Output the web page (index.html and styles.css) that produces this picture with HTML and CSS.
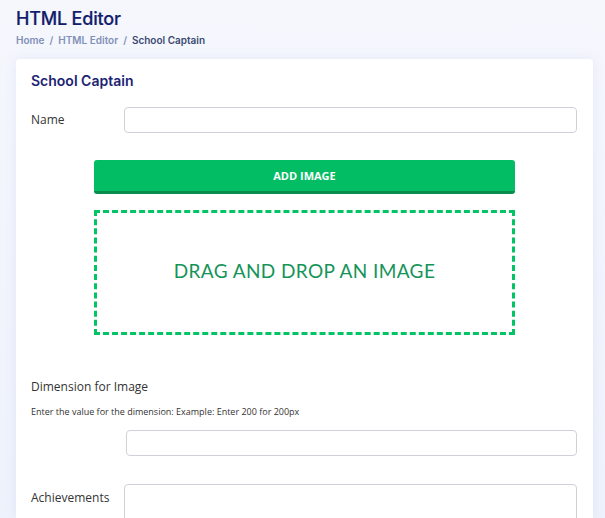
FILE: index.html
```html
<!DOCTYPE html>
<html lang="en">
<head>
<meta charset="utf-8">
<title>HTML Editor</title>
<link rel="stylesheet" href="styles.css">
</head>
<body>
<div class="page">
  <header class="page-head">
    <h1 class="page-title">HTML Editor</h1>
    <nav class="crumbs">
      <a class="crumb">Home</a><span class="sep">/</span><a class="crumb">HTML Editor</a><span class="sep">/</span><span class="crumb current">School Captain</span>
    </nav>
  </header>
  <section class="card">
    <h2 class="card-title">School Captain</h2>
    <div class="row">
      <label class="label">Name</label>
      <input class="input" type="text">
    </div>
    <div class="upload">
      <button class="btn-add">ADD IMAGE</button>
      <div class="dropzone">DRAG AND DROP AN IMAGE</div>
    </div>
    <div class="dim">
      <div class="label">Dimension for Image</div>
      <div class="hint">Enter the value for the dimension: Example: Enter 200 for 200px</div>
      <input class="input dim-input" type="text">
    </div>
    <div class="row row-ach">
      <label class="label">Achievements</label>
      <textarea class="input textarea"></textarea>
    </div>
  </section>
</div>
</body>
</html>
```
FILE: styles.css
```css
* { box-sizing: border-box; }
html, body { margin: 0; padding: 0; }
body {
  background: linear-gradient(180deg, #f5f7fd 0%, #eef2fc 100%);
  font-family: "Open Sans", "Liberation Sans", sans-serif;
  color: #333;
  overflow: hidden;
  height: 518px;
}
.page { padding: 7px 12px 0 16px; height: 518px; overflow: hidden; }
.page-title {
  margin: 0;
  font-family: Inter, "Noto Sans", sans-serif;
  font-weight: 500;
  font-size: 18px;
  line-height: 24px;
  color: #131d6b;
  letter-spacing: -0.2px;
  -webkit-text-stroke: 0.2px #131d6b;
}
.crumbs {
  margin-top: 2px;
  font-family: Inter, "Noto Sans", sans-serif;
  font-size: 10px;
  font-weight: 600;
  line-height: 14px;
  color: #8190b8;
}
.sep { margin: 0 5px; }
.crumb.current { color: #3c4a72; }
.card {
  margin-top: 12px;
  background: #fff;
  border-radius: 4px 4px 0 0;
  box-shadow: 0 0 12px rgba(120, 140, 200, 0.12);
  padding: 13px 16px 0 15px;
  width: 577px;
  height: 459px;
  overflow: hidden;
}
.card-title {
  margin: 0;
  font-family: Inter, "Noto Sans", sans-serif;
  font-weight: 600;
  font-size: 14px;
  line-height: 18px;
  color: #1b2472;
}
.row {
  display: flex;
  align-items: center;
  margin-top: 17px;
}
.label {
  font-size: 12px;
  line-height: 16px;
  color: #333;
  width: 93px;
  flex: none;
}
.input {
  display: block;
  height: 26px;
  flex: 1;
  border: 1px solid #cfd2d8;
  border-radius: 4px;
  background: #fff;
  margin: 0;
}
.upload {
  margin: 27px 62px 0 63px;
}
.btn-add {
  display: block;
  width: 100%;
  height: 34px;
  border: none;
  border-bottom: 3px solid #088e4c;
  border-radius: 3px;
  background: #02bd63;
  color: #fff;
  font-family: "Open Sans", sans-serif;
  font-weight: 700;
  font-size: 11px;
  padding: 0;
}
.dropzone {
  margin-top: 16px;
  height: 125px;
  border: 3px dashed #02c464;
  display: flex;
  align-items: center;
  justify-content: center;
  padding-bottom: 4px;
  font-family: Lato, "Noto Sans", sans-serif;
  font-weight: 400;
  font-size: 19px;
  color: #15945a;
  letter-spacing: 0.4px;
}
.dim { margin-top: 44px; }
.dim .label { width: auto; }
.hint {
  margin-top: 11px;
  font-size: 9px;
  line-height: 12px;
  color: #333;
}
.dim-input { width: 451px; margin: 12px 0 0 95px; }
.row-ach { margin-top: 28px; align-items: flex-start; }
.row-ach .label { margin-top: 6px; }
.textarea { height: 40px; resize: none; }
```
